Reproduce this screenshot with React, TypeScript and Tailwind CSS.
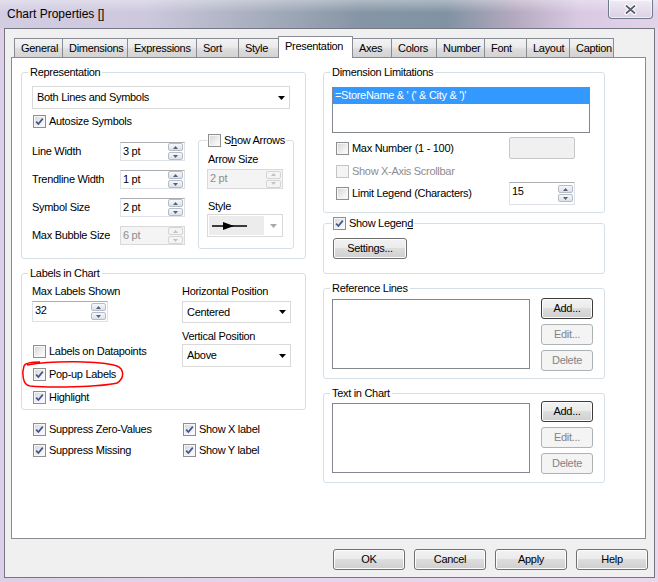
import React from 'react';

type BoxProps = { checked?: boolean; disabled?: boolean };

// Win7 style checkbox square
function Box({ checked = false, disabled = false }: BoxProps) {
  return (
    <span
      className={`flex h-[13px] w-[13px] shrink-0 items-center justify-center border ${
        disabled
          ? 'border-[#c4c4c4] bg-[#f4f4f4]'
          : 'border-[#8e8f8f] bg-[linear-gradient(135deg,#d4d4d4,#f2f2f2_65%,#ffffff)] shadow-[inset_0_0_0_1px_#f6f6f6]'
      }`}
    >
      {checked && (
        <svg width="9" height="9" viewBox="0 0 9 9">
          <path d="M1.2 4.6 L3.4 7 L7.8 1.6" fill="none" stroke="#3f5590" strokeWidth="1.7" />
        </svg>
      )}
    </span>
  );
}

function Check({ label, checked, disabled }: { label: React.ReactNode; checked?: boolean; disabled?: boolean }) {
  return (
    <span className={`flex h-[13px] items-center gap-[3px] ${disabled ? 'text-[#8d8d8d]' : ''}`}>
      <Box checked={checked} disabled={disabled} />
      <span className="whitespace-nowrap">{label}</span>
    </span>
  );
}

function Arrow({ up = false, disabled = false }: { up?: boolean; disabled?: boolean }) {
  return (
    <span
      className={`flex h-[8px] w-[15px] items-center justify-center rounded-[2px] border ${
        disabled ? 'border-[#d5d5d5] bg-[#f4f4f4]' : 'border-[#b5bcc6] bg-[linear-gradient(#f6f7f9,#dde2e8)]'
      }`}
    >
      <svg width="5" height="3" viewBox="0 0 5 3">
        <path d={up ? 'M0 3H5L2.5 0Z' : 'M0 0H5L2.5 3Z'} fill={disabled ? '#c2c2c2' : '#4f6285'} />
      </svg>
    </span>
  );
}

function Spin({ value, w, h, disabled = false }: { value: string; w: string; h: string; disabled?: boolean }) {
  return (
    <div
      className={`flex shrink-0 ${w} ${h} border ${
        disabled ? 'border-[#d9d9d9] bg-[#f4f4f4] text-[#8d8d8d]' : 'border-[#dde2e8] border-t-[#abadb3] bg-white'
      }`}
    >
      <span className="flex-1 pl-[2px] pt-[2px]">{value}</span>
      <span className="flex flex-col justify-center gap-[1px] pr-[1px]">
        <Arrow up disabled={disabled} />
        <Arrow disabled={disabled} />
      </span>
    </div>
  );
}

function Combo({ value, w, h }: { value: string; w: string; h: string }) {
  return (
    <div className={`flex ${w} ${h} items-center border border-[#d9d9d9] bg-white pl-[4px] pr-[4px]`}>
      <span className="flex-1 whitespace-nowrap">{value}</span>
      <svg width="7" height="4" viewBox="0 0 7 4">
        <path d="M0 0H7L3.5 4Z" fill="#000" />
      </svg>
    </div>
  );
}

function Btn({ label, w, dark = false, disabled = false }: { label: string; w: string; dark?: boolean; disabled?: boolean }) {
  return (
    <div
      className={`flex h-[21px] shrink-0 ${w} items-center justify-center rounded-[3px] border ${
        disabled
          ? 'border-[#adb2b5] bg-[#f4f4f4] text-[#838383]'
          : `${dark ? 'border-[#3c3c3c]' : 'border-[#707070]'} bg-[linear-gradient(#f2f2f2_0%,#ebebeb_49%,#dddddd_50%,#cfcfcf_100%)] shadow-[inset_0_0_0_1px_#fcfcfc]`
      }`}
    >
      {label}
    </div>
  );
}

function Group({
  title,
  className,
  legendClass = 'ml-[6px] px-[2px]',
  children,
}: {
  title: React.ReactNode;
  className: string;
  legendClass?: string;
  children?: React.ReactNode;
}) {
  return (
    <fieldset className={`shrink-0 rounded-[3px] border border-[#d5dfe5] ${className}`}>
      <legend className={`leading-[13px] ${legendClass}`}>{title}</legend>
      {children}
    </fieldset>
  );
}

const tabs = [
  { name: 'General', w: 'w-[49px]' },
  { name: 'Dimensions', w: 'w-[66px]' },
  { name: 'Expressions', w: 'w-[70px]' },
  { name: 'Sort', w: 'w-[43px]' },
  { name: 'Style', w: 'w-[41px]' },
  { name: 'Presentation', w: 'w-[75px]' },
  { name: 'Axes', w: 'w-[40px]' },
  { name: 'Colors', w: 'w-[46px]' },
  { name: 'Number', w: 'w-[49px]' },
  { name: 'Font', w: 'w-[43px]' },
  { name: 'Layout', w: 'w-[44px]' },
  { name: 'Caption', w: 'w-[45px]' },
];

const spinRows = [
  { label: 'Line Width', value: '3 pt' },
  { label: 'Trendline Width', value: '1 pt' },
  { label: 'Symbol Size', value: '2 pt' },
  { label: 'Max Bubble Size', value: '6 pt', disabled: true },
];

export default function App() {
  return (
    <div className="relative h-[582px] w-[658px] overflow-hidden bg-[linear-gradient(90deg,#dccfe7,#e6d5ec_40%,#ead8ee)] font-['Liberation_Sans',Arial,sans-serif] text-[11px] leading-[13px] tracking-[-0.3px] text-black">
      {/* Aero title bar */}
      <div className="flex h-[28px] bg-[image:linear-gradient(180deg,rgba(255,255,255,0.35),rgba(255,255,255,0)_45%),linear-gradient(90deg,#d3cde2_0%,#cdc8de_22%,#aab0c0_38%,#8595a5_55%,#8193a3_68%,#b3a9bf_78%,#d9c9e3_88%,#e2d3ea_100%)]">
        <span className="pl-[7px] pt-[8px] text-[12px] tracking-normal">Chart Properties []</span>
        <div className="ml-auto mr-[5px] flex h-[19px] w-[45px] items-center justify-center rounded-b-[4px] border border-t-0 border-[#6f7b89] bg-[linear-gradient(#f2eef6cc,#d9d2e2aa)] shadow-[inset_0_0_0_1px_rgba(255,255,255,0.6)]">
          <svg width="13" height="11" viewBox="0 0 13 11">
            <path d="M2.5 2 L10.5 9 M10.5 2 L2.5 9" stroke="#ffffff" strokeWidth="4" strokeLinecap="round" />
            <path d="M2.5 2 L10.5 9 M10.5 2 L2.5 9" stroke="#58606c" strokeWidth="1.8" strokeLinecap="round" />
          </svg>
        </div>
      </div>

      {/* Client area */}
      <div className="ml-[4px] mr-[3px] h-[550px] border border-[#747781] bg-[#f0f0f0]">
        <div className="relative z-10 ml-[9px] mb-[-1px] mt-[7px] flex h-[22px] items-end">
          {tabs.map((t, i) =>
            t.name === 'Presentation' ? (
              <div
                key={t.name}
                className={`relative z-10 -ml-px flex h-[22px] ${t.w} items-start border border-b-0 border-[#898c95] bg-white pl-[6px] pt-[3px]`}
              >
                {t.name}
              </div>
            ) : (
              <div
                key={t.name}
                className={`${i === 0 ? '' : '-ml-px'} mb-[1px] flex h-[19px] ${t.w} items-center border border-b-0 border-[#898c95] bg-[linear-gradient(#f3f3f3,#ebebeb_45%,#dddddd_55%,#d3d3d3)] pl-[6px]`}
              >
                {t.name}
              </div>
            )
          )}
        </div>

        {/* Tab page */}
        <div className="ml-[6px] flex h-[482px] w-[635px] gap-[17px] border border-[#898c95] bg-white pl-[9px] pt-[8px]">
          {/* Left column */}
          <div className="w-[285px]">
            <Group title="Representation" className="h-[193px] w-[285px]">
              <div className="ml-[10px] mt-[7px]">
                <Combo value="Both Lines and Symbols" w="w-[258px]" h="h-[23px]" />
              </div>
              <div className="ml-[11px] mt-[6px]">
                <Check label="Autosize Symbols" checked />
              </div>
              <div className="ml-[10px] mt-[6px] flex">
                <div className="flex w-[166px] flex-col gap-[9px] pt-[8px]">
                  {spinRows.map((r) => (
                    <div key={r.label} className="flex h-[19px] items-center">
                      <span className="w-[88px] whitespace-nowrap">{r.label}</span>
                      <Spin value={r.value} w="w-[65px]" h="h-[19px]" disabled={r.disabled} />
                    </div>
                  ))}
                </div>
                <Group
                  className="h-[115px] w-[96px]"
                  legendClass="ml-[8px] px-[1px]"
                  title={
                    <Check
                      label={
                        <>
                          S<span className="underline">h</span>ow Arrows
                        </>
                      }
                    />
                  }
                >
                  <div className="ml-[9px] mt-[6px]">Arrow Size</div>
                  <div className="ml-[8px] mt-[3px]">
                    <Spin value="2 pt" w="w-[76px]" h="h-[20px]" disabled />
                  </div>
                  <div className="ml-[9px] mt-[11px]">Style</div>
                  <div className="ml-[8px] mt-[1px] flex h-[23px] w-[76px] items-center border border-[#d9d9d9] bg-white pl-[1px] pr-[5px]">
                    <div className="flex h-[19px] w-[55px] items-center bg-[#ececec]">
                      <svg width="36" height="10" viewBox="0 0 36 10" className="ml-[3px]">
                        <path d="M0 5H35" stroke="#000" strokeWidth="1.3" />
                        <path d="M11 1L22 5L11 9Z" fill="#000" />
                      </svg>
                    </div>
                    <svg width="7" height="4" viewBox="0 0 7 4" className="ml-auto">
                      <path d="M0 0H7L3.5 4Z" fill="#a8a8a8" />
                    </svg>
                  </div>
                </Group>
              </div>
            </Group>

            <Group title="Labels in Chart" className="mt-[8px] h-[143px] w-[285px]">
              <div className="ml-[10px] flex">
                <div className="w-[150px] pt-[5px]">
                  <div>Max Labels Shown</div>
                  <div className="mt-[3px]">
                    <Spin value="32" w="w-[76px]" h="h-[21px]" />
                  </div>
                  <div className="ml-[1px] mt-[23px] flex flex-col gap-[10px]">
                    <Check label="Labels on Datapoints" />
                    <Check label="Pop-up Labels" checked />
                    <Check label="Highlight" checked />
                  </div>
                </div>
                <div className="w-[109px] pt-[5px]">
                  <div>Horizontal Position</div>
                  <div className="mt-[3px]">
                    <Combo value="Centered" w="w-[109px]" h="h-[22px]" />
                  </div>
                  <div className="mt-[7px]">Vertical Position</div>
                  <div className="mt-[1px]">
                    <Combo value="Above" w="w-[109px]" h="h-[23px]" />
                  </div>
                </div>
              </div>
            </Group>

            <div className="ml-[12px] mt-[13px] grid grid-cols-[150px_1fr] gap-y-[8px]">
              <Check label="Suppress Zero-Values" checked />
              <Check label="Show X label" checked />
              <Check label="Suppress Missing" checked />
              <Check label="Show Y label" checked />
            </div>
          </div>

          {/* Right column */}
          <div className="w-[282px]">
            <Group title="Dimension Limitations" className="h-[147px] w-[282px]">
              <div className="ml-[8px] mt-[8px] h-[46px] w-[258px] border border-[#828790] bg-white">
                <div className="h-[16px] whitespace-nowrap bg-[#3399ff] pl-[2px] pt-[1px] text-white">
                  {"=StoreName & ' (' & City & ')'"}
                </div>
              </div>
              <div className="mt-[4px] flex h-[22px] items-center pl-[12px]">
                <Check label="Max Number (1 - 100)" />
                <div className="ml-auto mr-[29px] h-[22px] w-[66px] rounded-[2px] border border-[#c8c8c8] bg-[#f0f0f0]" />
              </div>
              <div className="mt-[6px] pl-[12px]">
                <Check label="Show X-Axis Scrollbar" disabled />
              </div>
              <div className="mt-[4px] flex h-[23px] items-center pl-[12px]">
                <Check label="Limit Legend (Characters)" />
                <div className="ml-auto mr-[29px]">
                  <Spin value="15" w="w-[66px]" h="h-[23px]" />
                </div>
              </div>
            </Group>

            <Group
              className="mt-[4px] h-[57px] w-[282px]"
              legendClass="ml-[8px] px-[1px]"
              title={
                <Check
                  checked
                  label={
                    <>
                      Show Legen<span className="underline">d</span>
                    </>
                  }
                />
              }
            >
              <div className="ml-[9px] mt-[8px]">
                <Btn label="Settings..." w="w-[74px]" />
              </div>
            </Group>

            <Group title="Reference Lines" className="mt-[8px] h-[97px] w-[282px]">
              <div className="mt-[3px] flex items-start">
                <div className="ml-[8px] mt-[1px] h-[70px] w-[198px] border border-[#828790] bg-white" />
                <div className="ml-[11px] flex flex-col gap-[5px]">
                  <Btn label="Add..." w="w-[52px]" dark />
                  <Btn label="Edit..." w="w-[52px]" disabled />
                  <Btn label="Delete" w="w-[52px]" disabled />
                </div>
              </div>
            </Group>

            <Group title="Text in Chart" className="mt-[8px] h-[96px] w-[282px]">
              <div className="mt-[1px] flex items-start">
                <div className="ml-[8px] mt-[2px] h-[70px] w-[198px] border border-[#828790] bg-white" />
                <div className="ml-[11px] flex flex-col gap-[5px]">
                  <Btn label="Add..." w="w-[52px]" dark />
                  <Btn label="Edit..." w="w-[52px]" disabled />
                  <Btn label="Delete" w="w-[52px]" disabled />
                </div>
              </div>
            </Group>
          </div>
        </div>

        {/* Dialog buttons */}
        <div className="mt-[10px] flex justify-end gap-[9px] pr-[6px]">
          <Btn label="OK" w="w-[72px]" />
          <Btn label="Cancel" w="w-[72px]" />
          <Btn label="Apply" w="w-[72px]" />
          <Btn label="Help" w="w-[72px]" />
        </div>
      </div>

      {/* hand-drawn red annotation */}
      <svg className="pointer-events-none absolute left-0 top-0" width="658" height="582" viewBox="0 0 658 582">
        <path
          d="M27 365 C55 360, 100 361, 117 366 C124 369, 125 378, 117 383 C100 387, 50 388, 30 386 C22 385, 22 372, 24 366 C25 363, 30 362, 40 362"
          fill="none"
          stroke="#ff0000"
          strokeWidth="1.5"
        />
      </svg>
    </div>
  );
}
